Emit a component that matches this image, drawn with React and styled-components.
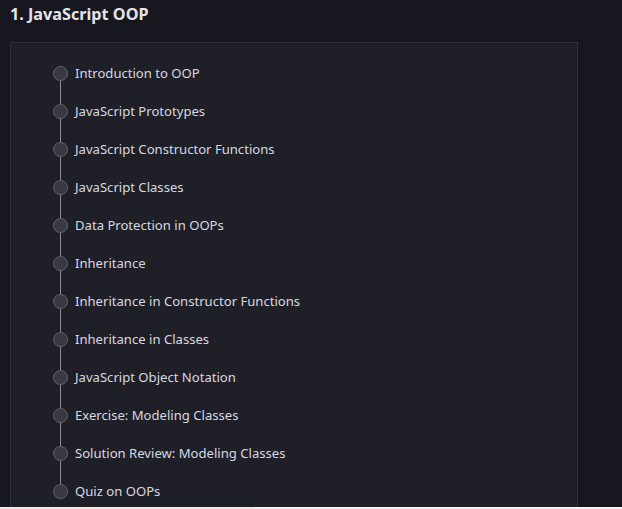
import React from 'react';
import styled, { createGlobalStyle } from 'styled-components';

const GlobalStyle = createGlobalStyle`
  html, body {
    margin: 0;
    padding: 0;
    background: #17171f;
  }
  body {
    font-family: "Noto Sans", "Open Sans", sans-serif;
    height: 509px;
    overflow: hidden;
  }
`;

const Page = styled.div`
  height: 509px;
  display: flex;
  flex-direction: column;
  background: #17171f;
`;

const Content = styled.div`
  flex: 1;
  padding: 4px 44px 0 10px;
  overflow: hidden;
`;

const Title = styled.h2`
  margin: 0;
  font-size: 16.2px;
  font-weight: 700;
  color: #e4e4ea;
  line-height: 20px;
`;

const Panel = styled.div`
  margin-top: 18px;
  background: #1f1f28;
  border: 1px solid #2f2f3d;
  border-bottom: none;
  padding: 11px 0 0 42px;
  height: 100%;
`;

const List = styled.ul`
  list-style: none;
  margin: 0;
  padding: 0;
`;

const Row = styled.li`
  position: relative;
  height: 38px;
  display: flex;
  align-items: center;
  gap: 7px;

  &:not(:last-child)::after {
    content: '';
    position: absolute;
    left: 7px;
    top: 19px;
    width: 1px;
    height: 38px;
    background: #8c8c94;
  }
`;

const Dot = styled.span`
  position: relative;
  z-index: 1;
  box-sizing: border-box;
  width: 15px;
  height: 15px;
  border-radius: 50%;
  background: #393942;
  border: 1px solid #62626c;
  flex: none;
`;

const Label = styled.span`
  font-size: 13.1px;
  color: #d6d8e0;
`;

const Strip = styled.div`
  height: 2px;
  background: linear-gradient(90deg, #f3ecd8 0 41%, #f4f4f4 41% 100%);
`;

const lessons = [
  'Introduction to OOP',
  'JavaScript Prototypes',
  'JavaScript Constructor Functions',
  'JavaScript Classes',
  'Data Protection in OOPs',
  'Inheritance',
  'Inheritance in Constructor Functions',
  'Inheritance in Classes',
  'JavaScript Object Notation',
  'Exercise: Modeling Classes',
  'Solution Review: Modeling Classes',
  'Quiz on OOPs',
];

export default function App() {
  return (
    <Page>
      <GlobalStyle />
      <Content>
        <Title>1. JavaScript OOP</Title>
        <Panel>
          <List>
            {lessons.map((l) => (
              <Row key={l}>
                <Dot />
                <Label>{l}</Label>
              </Row>
            ))}
          </List>
        </Panel>
      </Content>
      <Strip />
    </Page>
  );
}
